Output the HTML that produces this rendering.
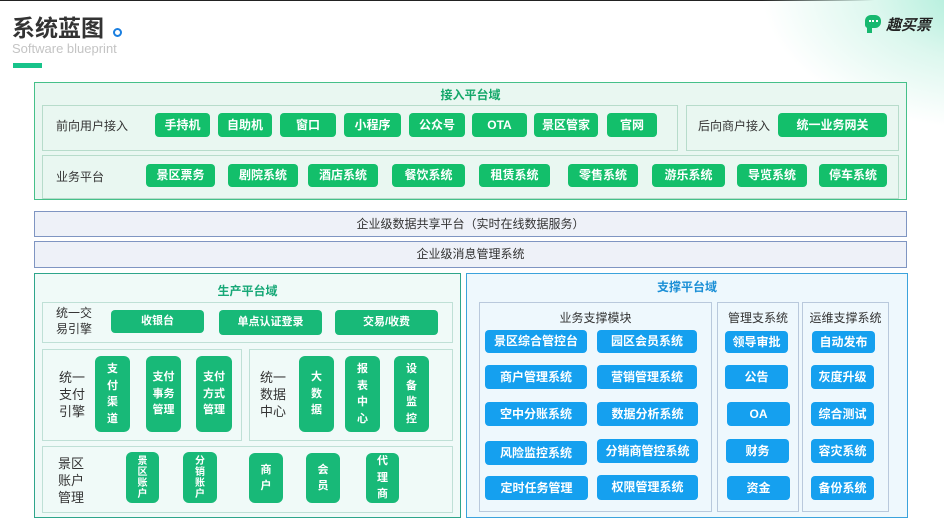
<!DOCTYPE html>
<html><head><meta charset="utf-8"><style>
*{margin:0;padding:0;box-sizing:border-box}
body{width:944px;height:523px;position:relative;overflow:hidden;background:#fff;font-family:"Liberation Sans","Noto Sans CJK SC",sans-serif;color:#333}
.a{position:absolute}
.b{position:absolute;display:flex;align-items:center;justify-content:center;color:#fff;font-weight:bold;font-size:12px;border-radius:4px;text-align:center;line-height:1.25}
.g{background:#13bf6b}
.p{background:#18b978}
.bl{background:#15a0ef;font-size:12px}
.v{font-size:11px;line-height:1.5;border-radius:6px}
.lab{position:absolute;font-size:12px;color:#333;line-height:1.4}
.sub{position:absolute;border:1px solid #b7dccb}
.t{position:absolute;font-weight:bold;font-size:12px;text-align:center}
.v4{font-size:10px;line-height:11px}
.v4 span{display:block;height:11px;line-height:11px}
</style></head><body>
<div class="a" style="left:0;top:0;width:944px;height:1px;background:#222"></div>
<div class="a" style="left:760px;top:-120px;width:300px;height:250px;border-radius:50%;background:radial-gradient(ellipse at 75% 45%,#a5ecd6 0%,#dcf7ee 35%,rgba(255,255,255,0) 70%)"></div>
<div class="a" style="left:12px;top:9px;font-size:23px;font-weight:bold;color:#333">系统蓝图</div>
<div class="a" style="left:113px;top:28px;width:9px;height:9px;border:2px solid #1a7fe0;border-radius:50%"></div>
<div class="a" style="left:12px;top:41px;font-size:13px;color:#c4c4c4">Software blueprint</div>
<div class="a" style="left:13px;top:63px;width:29px;height:5px;background:#17c38a"></div>
<div class="a" style="left:865px;top:15px;width:16px;height:13px;background:#17b86f;border-radius:6px 6px 6px 3px"></div>
<div class="a" style="left:867px;top:26px;width:5px;height:7px;background:#17b86f"></div>
<div class="a" style="left:869px;top:20px;width:9px;height:3px;border-top:2px dotted #fff"></div>
<div class="a" style="left:886px;top:14px;font-size:15px;font-weight:bold;font-style:italic;color:#222">趣买票</div>

<div class="a" style="left:34px;top:82px;width:873px;height:118px;background:#e9f7f1;border:1px solid #45c089"></div>
<div class="t" style="left:34px;top:86px;width:873px;color:#15a86a">接入平台域</div>
<div class="sub" style="left:42px;top:105px;width:636px;height:46px"></div>
<div class="lab" style="left:56px;top:118px">前向用户接入</div>
<div class="b g" style="left:155px;top:113px;width:55px;height:24px">手持机</div>
<div class="b g" style="left:218px;top:113px;width:54px;height:24px">自助机</div>
<div class="b g" style="left:280px;top:113px;width:56px;height:24px">窗口</div>
<div class="b g" style="left:344px;top:113px;width:57px;height:24px">小程序</div>
<div class="b g" style="left:409px;top:113px;width:56px;height:24px">公众号</div>
<div class="b g" style="left:472px;top:113px;width:55px;height:24px">OTA</div>
<div class="b g" style="left:534px;top:113px;width:64px;height:24px">景区管家</div>
<div class="b g" style="left:607px;top:113px;width:50px;height:24px">官网</div>
<div class="sub" style="left:686px;top:105px;width:213px;height:46px"></div>
<div class="lab" style="left:698px;top:118px">后向商户接入</div>
<div class="b g" style="left:778px;top:113px;width:109px;height:24px">统一业务网关</div>
<div class="sub" style="left:42px;top:155px;width:857px;height:44px"></div>
<div class="lab" style="left:56px;top:169px">业务平台</div>
<div class="b g" style="left:146px;top:164px;width:69px;height:23px">景区票务</div>
<div class="b g" style="left:228px;top:164px;width:70px;height:23px">剧院系统</div>
<div class="b g" style="left:308px;top:164px;width:70px;height:23px">酒店系统</div>
<div class="b g" style="left:392px;top:164px;width:73px;height:23px">餐饮系统</div>
<div class="b g" style="left:479px;top:164px;width:71px;height:23px">租赁系统</div>
<div class="b g" style="left:568px;top:164px;width:70px;height:23px">零售系统</div>
<div class="b g" style="left:652px;top:164px;width:73px;height:23px">游乐系统</div>
<div class="b g" style="left:737px;top:164px;width:70px;height:23px">导览系统</div>
<div class="b g" style="left:819px;top:164px;width:68px;height:23px">停车系统</div>

<div class="a" style="left:34px;top:211px;width:873px;height:26px;background:#eef1f8;border:1px solid #7f95c2;text-align:center;font-size:12px;line-height:24px">企业级数据共享平台（实时在线数据服务）</div>
<div class="a" style="left:34px;top:241px;width:873px;height:27px;background:#eef1f8;border:1px solid #7f95c2;text-align:center;font-size:12px;line-height:25px">企业级消息管理系统</div>

<div class="a" style="left:34px;top:273px;width:427px;height:245px;background:#f0faf8;border:1px solid #2ea58b"></div>
<div class="t" style="left:34px;top:282px;width:427px;color:#17a877">生产平台域</div>
<div class="sub" style="left:42px;top:302px;width:411px;height:41px;border-color:#bfe0d6"></div>
<div class="lab" style="left:56px;top:306px;font-size:12px;line-height:1.3">统一交<br>易引擎</div>
<div class="b p" style="left:111px;top:310px;width:93px;height:23px;font-size:11px">收银台</div>
<div class="b p" style="left:219px;top:310px;width:103px;height:25px;font-size:11px">单点认证登录</div>
<div class="b p" style="left:335px;top:310px;width:103px;height:25px;font-size:11px">交易/收费</div>
<div class="sub" style="left:42px;top:349px;width:200px;height:92px;border-color:#bfe0d6"></div>
<div class="lab" style="left:59px;top:370px;font-size:13px;line-height:1.3">统一<br>支付<br>引擎</div>
<div class="b p v" style="left:95px;top:356px;width:35px;height:76px">支<br>付<br>渠<br>道</div>
<div class="b p v" style="left:146px;top:356px;width:35px;height:76px">支付<br>事务<br>管理</div>
<div class="b p v" style="left:196px;top:356px;width:36px;height:76px">支付<br>方式<br>管理</div>
<div class="sub" style="left:249px;top:349px;width:204px;height:92px;border-color:#bfe0d6"></div>
<div class="lab" style="left:260px;top:370px;font-size:13px;line-height:1.3">统一<br>数据<br>中心</div>
<div class="b p v" style="left:299px;top:356px;width:35px;height:76px">大<br>数<br>据</div>
<div class="b p v" style="left:345px;top:356px;width:35px;height:76px">报<br>表<br>中<br>心</div>
<div class="b p v" style="left:394px;top:356px;width:35px;height:76px">设<br>备<br>监<br>控</div>
<div class="sub" style="left:42px;top:446px;width:411px;height:67px;border-color:#bfe0d6"></div>
<div class="lab" style="left:58px;top:456px;font-size:13px;line-height:1.3">景区<br>账户<br>管理</div>
<div class="b p v v4" style="left:126px;top:452px;width:33px;height:51px;flex-direction:column"><span>景</span><span>区</span><span>账</span><span>户</span></div>
<div class="b p v v4" style="left:183px;top:452px;width:34px;height:51px;flex-direction:column"><span>分</span><span>销</span><span>账</span><span>户</span></div>
<div class="b p v" style="left:249px;top:453px;width:34px;height:50px">商<br>户</div>
<div class="b p v" style="left:306px;top:453px;width:34px;height:50px">会<br>员</div>
<div class="b p v" style="left:366px;top:453px;width:33px;height:50px">代<br>理<br>商</div>

<div class="a" style="left:466px;top:273px;width:442px;height:245px;background:#eef8fd;border:1px solid #3ba3dc"></div>
<div class="t" style="left:466px;top:278px;width:442px;color:#1b8fd6">支撑平台域</div>
<div class="sub" style="left:479px;top:302px;width:233px;height:210px;border-color:#b9c9dc"></div>
<div class="sub" style="left:717px;top:302px;width:82px;height:210px;border-color:#b9c9dc"></div>
<div class="sub" style="left:802px;top:302px;width:87px;height:210px;border-color:#b9c9dc"></div>
<div class="lab" style="left:479px;top:310px;width:233px;text-align:center">业务支撑模块</div>
<div class="lab" style="left:717px;top:310px;width:82px;text-align:center">管理支系统</div>
<div class="lab" style="left:802px;top:310px;width:87px;text-align:center">运维支撑系统</div>
<div class="b bl" style="left:485px;top:330px;width:102px;height:23px">景区综合管控台</div>
<div class="b bl" style="left:597px;top:330px;width:100px;height:23px">园区会员系统</div>
<div class="b bl" style="left:485px;top:365px;width:102px;height:24px">商户管理系统</div>
<div class="b bl" style="left:597px;top:365px;width:100px;height:24px">营销管理系统</div>
<div class="b bl" style="left:485px;top:402px;width:102px;height:24px">空中分账系统</div>
<div class="b bl" style="left:597px;top:402px;width:101px;height:24px">数据分析系统</div>
<div class="b bl" style="left:485px;top:441px;width:102px;height:24px">风险监控系统</div>
<div class="b bl" style="left:597px;top:439px;width:101px;height:24px">分销商管控系统</div>
<div class="b bl" style="left:485px;top:476px;width:103px;height:24px">定时任务管理</div>
<div class="b bl" style="left:597px;top:475px;width:101px;height:25px">权限管理系统</div>
<div class="b bl" style="left:725px;top:331px;width:63px;height:22px">领导审批</div>
<div class="b bl" style="left:725px;top:365px;width:63px;height:24px">公告</div>
<div class="b bl" style="left:727px;top:402px;width:63px;height:24px">OA</div>
<div class="b bl" style="left:726px;top:439px;width:63px;height:24px">财务</div>
<div class="b bl" style="left:727px;top:476px;width:63px;height:24px">资金</div>
<div class="b bl" style="left:812px;top:331px;width:63px;height:22px">自动发布</div>
<div class="b bl" style="left:811px;top:365px;width:63px;height:24px">灰度升级</div>
<div class="b bl" style="left:811px;top:402px;width:63px;height:24px">综合测试</div>
<div class="b bl" style="left:811px;top:439px;width:63px;height:24px">容灾系统</div>
<div class="b bl" style="left:811px;top:476px;width:63px;height:24px">备份系统</div>
</body></html>
